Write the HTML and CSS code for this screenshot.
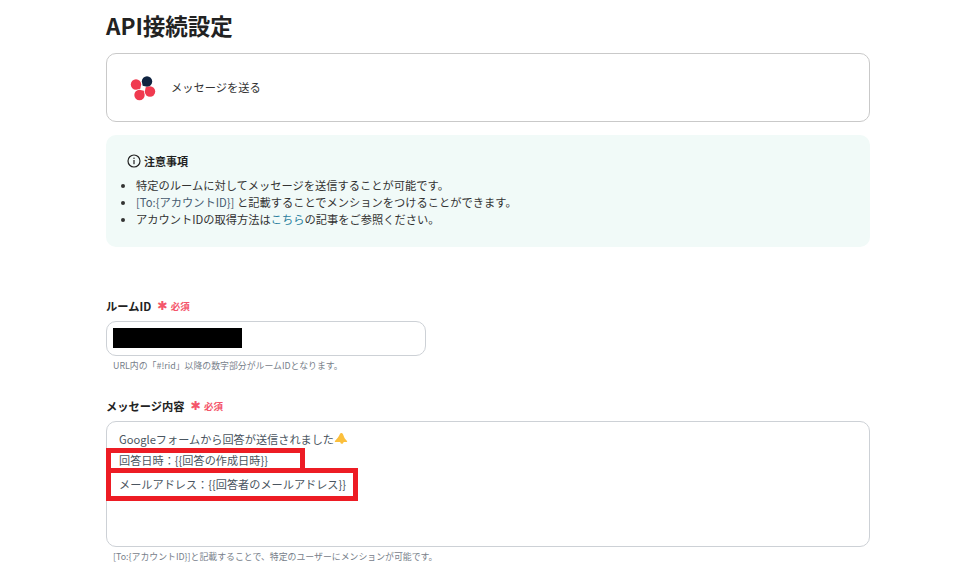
FILE: index.html
```html
<!DOCTYPE html>
<html lang="ja">
<head>
<meta charset="utf-8">
<title>API接続設定</title>
<link rel="stylesheet" href="styles.css">
</head>
<body>
<main class="page">
  <h1 class="title">API接続設定</h1>
  <section class="action-card">
    <svg class="logo" width="26" height="26" viewBox="0 0 26 26" aria-hidden="true">
      <path fill="#0f2340" transform="translate(17 6.500)" d="M-5.200 0A5.200 5.200 0 1 1 0 5.200L-4.300 4.300Z"/>
      <path fill="#f03a4f" transform="translate(6 9.500) rotate(-90)" d="M-5.200 0A5.200 5.200 0 1 1 0 5.200L-4.300 4.300Z"/>
      <path fill="#f03a4f" transform="translate(9.500 20) rotate(180)" d="M-5.200 0A5.200 5.200 0 1 1 0 5.200L-4.300 4.300Z"/>
      <path fill="#f03a4f" transform="translate(20 16.500) rotate(90)" d="M-5.200 0A5.200 5.200 0 1 1 0 5.200L-4.300 4.300Z"/>
    </svg>
    <span class="action-name">メッセージを送る</span>
  </section>
  <section class="notice">
    <h2 class="notice-head">
      <svg class="info" width="14" height="14" viewBox="0 0 14 14" aria-hidden="true">
        <circle cx="7" cy="7" r="6" fill="none" stroke="#222" stroke-width="1.200"/>
        <rect x="6.400" y="6" width="1.200" height="4.200" fill="#222"/>
        <rect x="6.400" y="3.600" width="1.200" height="1.300" fill="#222"/>
      </svg>
      注意事項
    </h2>
    <ul class="notice-list">
      <li>特定のルームに対してメッセージを送信することが可能です。</li>
      <li><span class="code">[To:{アカウントID}]</span> と記載することでメンションをつけることができます。</li>
      <li>アカウントIDの取得方法は<a class="link" href="#">こちら</a>の記事をご参照ください。</li>
    </ul>
  </section>
  <section class="field field-room">
    <div class="label">ルームID<span class="req"><span class="star">✱</span>必須</span></div>
    <div class="input"><span class="redact"></span></div>
    <p class="hint">URL内の「#!rid」以降の数字部分がルームIDとなります。</p>
  </section>
  <section class="field field-message">
    <div class="label">メッセージ内容<span class="req"><span class="star">✱</span>必須</span></div>
    <div class="textarea">
      <div class="line">Googleフォームから回答が送信されました<svg class="bell" width="14" height="14" viewBox="0 0 14 14" aria-hidden="true"><path fill="#fbbf3c" d="M7.500 1c1 0 1.500 1 2 2.500.5 1.800 1.500 3.500 3.500 5.500.4.400.2.900-.3.900H9.600c-.2 1.300-1 2-2 1.800-.8-.1-1.300-.8-1.300-1.800H1.500c-.6 0-.9-.5-.5-1C3 7 4.800 4.500 5.800 2.300 6.200 1.400 6.800 1 7.500 1z"/></svg></div>
      <div class="line line-date">回答日時：{{回答の作成日時}}</div>
      <div class="line line-mail">メールアドレス：{{回答者のメールアドレス}}</div>
    </div>
    <p class="hint">[To:{アカウントID}]と記載することで、特定のユーザーにメンションが可能です。</p>
    <span class="mark mark-a"></span>
    <span class="mark mark-b"></span>
  </section>
</main>
</body>
</html>
```
FILE: styles.css
```css
html, body {
  margin: 0;
  padding: 0;
  background: #fff;
  overflow: hidden;
  height: 573px;
}
body {
  font-family: "Noto Sans CJK JP", "Noto Sans", "Liberation Sans", sans-serif;
  color: #2b2b2b;
}
.page {
  width: 764px;
  margin-left: 106px;
}
.title {
  margin: 0;
  height: 53px;
  font-size: 22.500px;
  line-height: 50px;
  font-weight: 700;
  color: #222;
}
.action-card {
  box-sizing: border-box;
  height: 69px;
  border: 1px solid #c9c9c9;
  border-radius: 10px;
  display: flex;
  align-items: center;
  gap: 15px;
  padding-left: 23px;
}
.logo { flex: none; }
.action-name { font-size: 11.250px; color: #333; margin-top: -1px; }
.notice {
  box-sizing: border-box;
  height: 112px;
  margin-top: 13px;
  background: #f1faf8;
  border-radius: 10px;
  padding: 17px 21px;
}
.notice-head {
  margin: 0;
  display: flex;
  align-items: center;
  gap: 3px;
  font-size: 11px;
  line-height: 18px;
  font-weight: 700;
  color: #222;
}
.notice-list {
  margin: 7px 0 0;
  padding-left: 9px;
  font-size: 11.250px;
  line-height: 17px;
  color: #333;
}
.code { color: #475a70; }
.link { color: #2a7f9e; text-decoration: none; }
.field { position: relative; }
.field-room { margin-top: 50px; }
.field-message { margin-top: 25px; }
.label {
  display: flex;
  align-items: center;
  height: 18px;
  margin-bottom: 6px;
  font-size: 11.250px;
  line-height: 18px;
  font-weight: 700;
  color: #222;
  white-space: nowrap;
}
.req {
  display: flex;
  align-items: center;
  color: #f4566b;
  font-size: 9.500px;
  font-weight: 700;
  margin-left: 6px;
}
.star {
  font-family: "DejaVu Sans", sans-serif;
  font-size: 12.500px;
  line-height: 10px;
  margin-right: 3px;
}
.input {
  box-sizing: border-box;
  width: 320px;
  height: 35px;
  border: 1px solid #cdd1d6;
  border-radius: 10px;
  padding: 6px 6px;
}
.redact {
  display: block;
  width: 129px;
  height: 20px;
  background: #000;
}
.hint {
  margin: 3px 0 0 7px;
  font-size: 8.900px;
  line-height: 13px;
  color: #77808a;
}
.textarea {
  box-sizing: border-box;
  height: 126px;
  border: 1px solid #cdd1d6;
  border-radius: 10px;
  padding: 6px 12px;
  font-size: 11.170px;
  line-height: 22px;
  color: #4a5560;
}
.line { height: 22px; white-space: nowrap; }
.line-date { margin-top: -1px; }
.line-mail { margin-top: 2px; }
.bell { vertical-align: -2px; }
.mark {
  position: absolute;
  box-sizing: border-box;
  border: 5px solid #ed1c24;
}
.mark-a { left: 0; top: 51px; width: 199px; height: 25px; }
.mark-b { left: 0; top: 71px; width: 252px; height: 33px; }
```
